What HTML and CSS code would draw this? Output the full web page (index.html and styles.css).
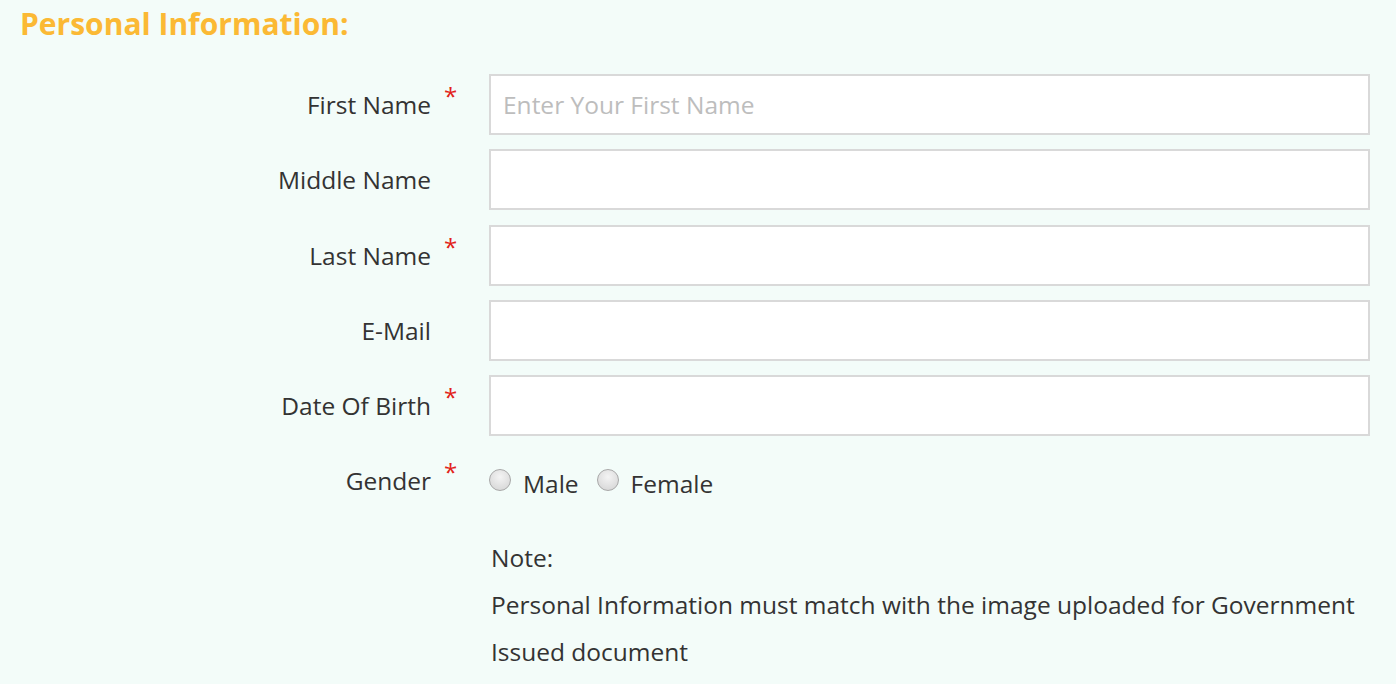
FILE: index.html
```html
<!DOCTYPE html>
<html lang="en">
<head>
    <meta charset="UTF-8">
    <meta name="viewport" content="width=device-width, initial-scale=1.0">
    <title>Personal Information</title>
    <link rel="stylesheet" href="styles.css">
</head>
<body>
    <!-- Section title -->
    <h2 class="section-title">Personal Information:</h2>

    <form class="personal-form">
        <div class="form-row">
            <label for="first-name">First Name</label>
            <span class="required">*</span>
            <input type="text" id="first-name" placeholder="Enter Your First Name">
        </div>

        <div class="form-row">
            <label for="middle-name">Middle Name</label>
            <span class="required"></span>
            <input type="text" id="middle-name">
        </div>

        <div class="form-row">
            <label for="last-name">Last Name</label>
            <span class="required">*</span>
            <input type="text" id="last-name">
        </div>

        <div class="form-row">
            <label for="email">E-Mail</label>
            <span class="required"></span>
            <input type="text" id="email">
        </div>

        <div class="form-row">
            <label for="dob">Date Of Birth</label>
            <span class="required">*</span>
            <input type="text" id="dob">
        </div>

        <div class="form-row gender-row">
            <label>Gender</label>
            <span class="required">*</span>
            <div class="radios">
                <label class="radio"><input type="radio" name="gender" value="male"> Male</label>
                <label class="radio"><input type="radio" name="gender" value="female"> Female</label>
            </div>
        </div>

        <!-- Note -->
        <div class="note">
            <p>Note:</p>
            <p>Personal Information must match with the image uploaded for Government Issued document</p>
        </div>
    </form>
</body>
</html>
```

FILE: styles.css
```css
/* Basic Reset */
* {
    margin: 0;
    padding: 0;
    box-sizing: border-box;
}

body {
    font-family: "Open Sans", Arial, sans-serif;
    background-color: #f3fcf9;
    color: #333;
    padding: 6px 26px 0 20px;
}

/* Title */
.section-title {
    color: #fbb934;
    font-size: 30px;
    font-weight: bold;
    line-height: 36px;
}

/* Form rows */
.personal-form {
    margin-top: 32px;
    display: flex;
    flex-direction: column;
    gap: 14.25px;
}

.form-row {
    display: grid;
    grid-template-columns: 411px 58px 1fr;
    align-items: center;
    height: 61px;
}

.form-row > label {
    text-align: right;
    font-size: 24.5px;
    color: #333;
}

.required {
    color: #e2231a;
    font-size: 24px;
    padding-left: 13px;
    align-self: start;
    margin-top: 5px;
}

.form-row input[type="text"] {
    height: 61px;
    width: 100%;
    border: 2px solid #d9d9d9;
    background-color: white;
    padding: 0 12px;
    font-family: inherit;
    font-size: 24.5px;
    color: #333;
}

.form-row input::placeholder {
    color: #bdbdbd;
}

/* Gender */
.radios {
    display: flex;
    gap: 18px;
    font-size: 24.5px;
    padding-top: 6px;
}

.radio {
    display: flex;
    align-items: center;
    gap: 12px;
}

.radio input {
    appearance: none;
    width: 22px;
    height: 22px;
    border-radius: 50%;
    border: 1px solid #a8a8a8;
    background: radial-gradient(circle at 50% 35%, #f4f4f4, #d2d2d2);
    margin-top: -8px;
}

/* Note */
.note {
    margin-top: 8px;
    margin-left: 471px;
    font-size: 24.5px;
    line-height: 47px;
}
```
